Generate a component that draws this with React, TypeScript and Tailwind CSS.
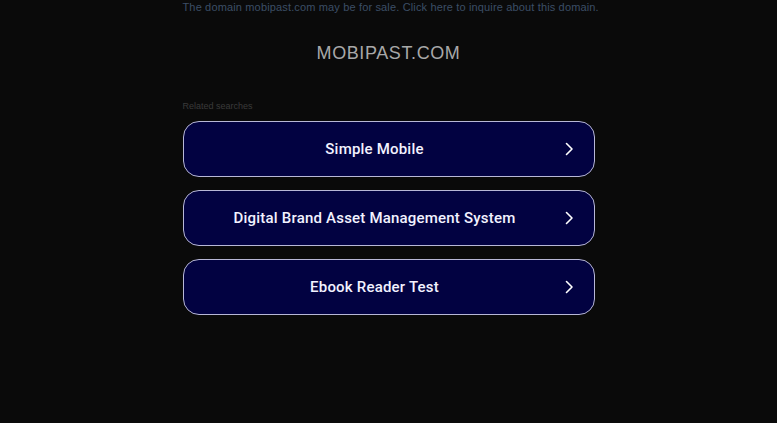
const searches = ['Simple Mobile', 'Digital Brand Asset Management System', 'Ebook Reader Test'];

const Chevron = () => (
  <svg width="10" height="14" viewBox="0 0 10 14" fill="none" className="shrink-0">
    <path d="M2.5 1.5 L8 7 L2.5 12.5" stroke="#ffffff" strokeWidth="1.6" strokeLinecap="round" strokeLinejoin="round" />
  </svg>
);

export default function App() {
  return (
    <div className="min-h-[423px] w-full bg-[#0a0a0a] font-['Liberation_Sans',Arial,sans-serif]">
      <div className="mx-auto w-[412px]">
        {/* Sale banner */}
        <p className="pt-[1px] text-center text-[11px] leading-[12px] tracking-[0.15px] text-[#3c4e66] whitespace-nowrap">
          The domain mobipast.com may be for sale. Click here to inquire about this domain.
        </p>

        {/* Domain title */}
        <h1 className="mt-[30px] text-center text-[18px] leading-[20px] tracking-[0.6px] text-[#a8a8a8]">MOBIPAST.COM</h1>

        {/* Related searches */}
        <p className="mt-[38px] text-[9px] leading-[10px] text-[#3a3a3a]">Related searches</p>

        <div className="mt-[10px] flex flex-col gap-[13px]">
          {searches.map((s) => (
            <div
              key={s}
              className="flex h-[56px] items-center rounded-[16px] border border-[#b7b7d6] bg-[#020241] pl-[2px] pr-[20px]"
            >
              <span className="flex-1 text-center font-['Roboto',sans-serif] text-[15px] font-medium tracking-[0.2px] text-[#f2f2ff]">
                {s}
              </span>
              <Chevron />
            </div>
          ))}
        </div>
      </div>
    </div>
  );
}
